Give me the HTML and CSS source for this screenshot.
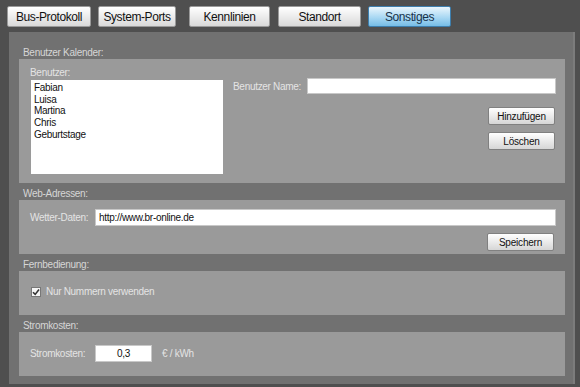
FILE: index.html
```html
<!DOCTYPE html>
<html lang="de">
<head>
    <meta charset="UTF-8">
    <title>Sonstiges</title>
    <link rel="stylesheet" href="styles.css">
</head>
<body>
    <div class="tabs">
        <button class="tab tab-bus">Bus-Protokoll</button>
        <button class="tab tab-ports">System-Ports</button>
        <button class="tab tab-kenn">Kennlinien</button>
        <button class="tab tab-standort">Standort</button>
        <button class="tab tab-active">Sonstiges</button>
    </div>

    <div class="panel">
        <!-- Benutzer Kalender -->
        <div class="section-title first">Benutzer Kalender:</div>
        <div class="box box-users">
            <div class="users-col">
                <div class="field-label">Benutzer:</div>
                <div class="listbox">
                    <div>Fabian</div>
                    <div>Luisa</div>
                    <div>Martina</div>
                    <div>Chris</div>
                    <div>Geburtstage</div>
                </div>
            </div>
            <div class="name-col">
                <div class="row">
                    <label class="field-label name-label" for="userName">Benutzer Name:</label>
                    <input class="text-input grow" type="text" id="userName">
                </div>
                <div class="actions">
                    <button class="btn">Hinzufügen</button>
                    <button class="btn">Löschen</button>
                </div>
            </div>
        </div>

        <!-- Web-Adressen -->
        <div class="section-title">Web-Adressen:</div>
        <div class="box box-web">
            <div class="row">
                <label class="field-label fixed" for="weather">Wetter-Daten:</label>
                <input class="text-input grow" type="text" id="weather" value="http://www.br-online.de">
            </div>
            <div class="actions">
                <button class="btn">Speichern</button>
            </div>
        </div>

        <!-- Fernbedienung -->
        <div class="section-title">Fernbedienung:</div>
        <div class="box box-remote">
            <label class="check-row">
                <span class="checkbox">
                    <svg width="8" height="8" viewBox="0 0 8 8"><path d="M1 4.2 L3.2 6.4 L7 1.4" fill="none" stroke="#333" stroke-width="1.6"/></svg>
                </span>
                Nur Nummern verwenden
            </label>
        </div>

        <!-- Stromkosten -->
        <div class="section-title">Stromkosten:</div>
        <div class="box box-power">
            <div class="row">
                <label class="field-label fixed" for="cost">Stromkosten:</label>
                <input class="text-input cost" type="text" id="cost" value="0,3">
                <span class="field-label unit">€ / kWh</span>
            </div>
        </div>
    </div>
</body>
</html>
```

FILE: styles.css
```css
body {
    margin: 0;
    background-color: #4f4f4f;
    font-family: "Liberation Sans", Arial, sans-serif;
    font-size: 10px;
    letter-spacing: -0.3px;
    width: 580px;
    height: 387px;
    overflow: hidden;
}

/* Reiter oben */
.tabs {
    display: flex;
    padding: 6px 0 0 7px;
    height: 26px;
    box-sizing: border-box;
}

.tab {
    height: 21px;
    padding: 0;
    border: 1px solid #9a9a9a;
    border-radius: 2px;
    background: linear-gradient(#ffffff, #d9d9d9);
    font-family: "Liberation Sans", Arial, sans-serif;
    font-size: 12px;
    letter-spacing: -0.4px;
    color: #111;
    margin-right: 7px;
}

.tab-bus { width: 84px; }
.tab-ports { width: 78px; margin-right: 13px; }
.tab-kenn { width: 81px; margin-right: 8px; }
.tab-standort { width: 83px; }
.tab-active {
    width: 83px;
    background: linear-gradient(#eaf6fd, #a9d8f3 55%, #76bde6);
    border-color: #3e7fae;
    color: #17324a;
}

/* Hauptbereich */
.panel {
    margin: 6px 0 0 9px;
    width: 566px;
    padding: 0 8px 8px 10px;
    box-sizing: border-box;
    background-color: #717171;
    border-right: 2px solid #7c7c7c;
}

.section-title {
    padding: 5px 0 0 4px;
    line-height: 12px;
    color: #d6d6d6;
}

.section-title.first {
    padding-top: 15px;
}

.box {
    background-color: #9a9a9a;
    padding: 0 9px 0 11px;
    box-sizing: border-box;
}

.field-label {
    color: #e4e4e4;
}

.row {
    display: flex;
    align-items: center;
}

.grow {
    flex: 1;
}

.text-input {
    height: 17px;
    box-sizing: border-box;
    border: 1px solid #c8c8c8;
    background: #fff;
    font-family: "Liberation Sans", Arial, sans-serif;
    font-size: 10px;
    letter-spacing: -0.3px;
    color: #111;
    padding: 0 3px;
    margin: 0;
}

.actions {
    display: flex;
    flex-direction: column;
    align-items: flex-end;
    gap: 7px;
    padding-right: 1px;
}

.btn {
    width: 67px;
    height: 18px;
    padding: 0;
    border: 1px solid #808080;
    border-radius: 2px;
    background: linear-gradient(#ffffff, #d6d6d6);
    font-family: "Liberation Sans", Arial, sans-serif;
    font-size: 10px;
    letter-spacing: -0.2px;
    color: #111;
}

/* Benutzer Kalender */
.box-users {
    height: 124px;
    display: flex;
    padding-top: 8px;
}

.users-col .field-label {
    line-height: 12px;
    margin-bottom: 1px;
    padding-left: 0;
}

.listbox {
    width: 192px;
    height: 94px;
    margin-left: 1px;
    background: #fff;
    color: #111;
    padding: 2px 3px;
    box-sizing: border-box;
    line-height: 11.7px;
}

.name-col {
    flex: 1;
    margin-left: 10px;
    padding-top: 11px;
}

.name-label {
    width: 74px;
}

.name-col .actions {
    margin-top: 13px;
}

.name-col .text-input {
    height: 16px;
}

/* Web-Adressen */
.box-web {
    height: 54px;
    padding-top: 9px;
}

.fixed {
    width: 65px;
}

.box-web .actions {
    margin-top: 7px;
    padding-right: 2px;
}

/* Fernbedienung */
.box-remote {
    height: 44px;
    padding-top: 15px;
}

.check-row {
    display: flex;
    align-items: center;
    color: #e4e4e4;
}

.checkbox {
    width: 10px;
    height: 10px;
    box-sizing: border-box;
    border: 1px solid #777;
    background: #f4f4f4;
    display: flex;
    align-items: center;
    justify-content: center;
    margin: 0 5px 0 1px;
}

/* Stromkosten */
.box-power {
    height: 44px;
    padding-top: 13px;
}

.cost {
    width: 57px;
    text-align: center;
}

.unit {
    margin-left: 10px;
}
```
